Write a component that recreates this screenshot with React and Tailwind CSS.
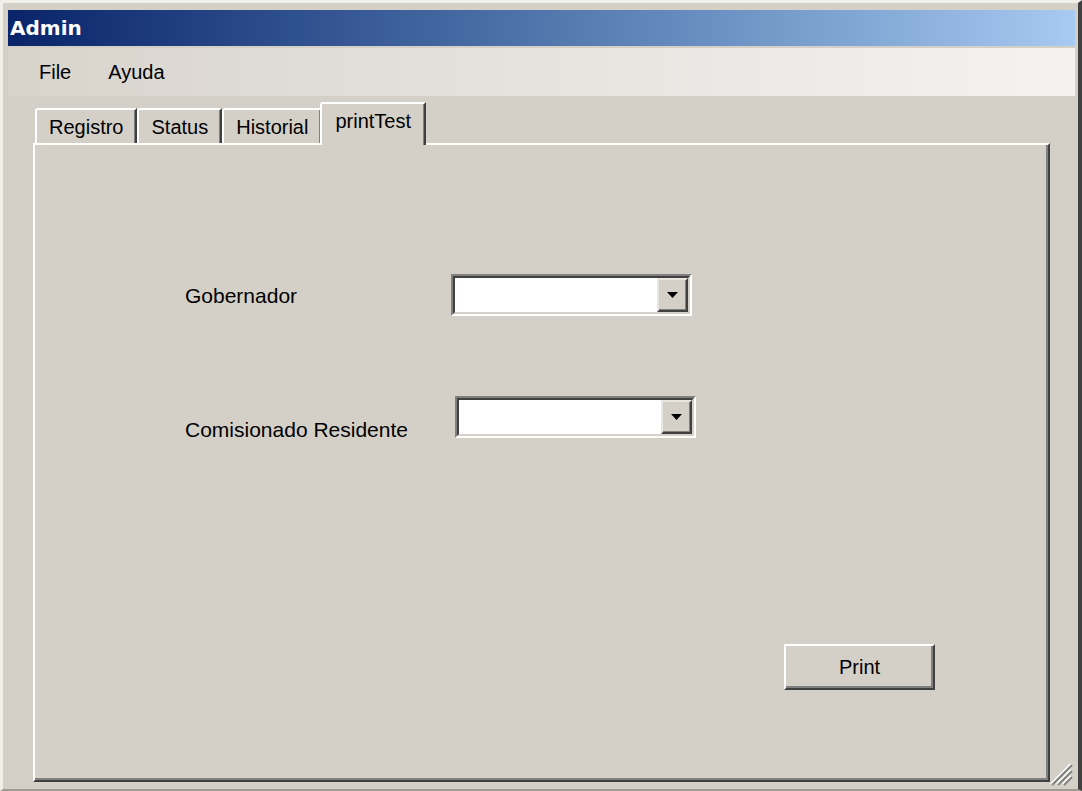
const uiFont = { fontFamily: '"Liberation Sans", Arial, sans-serif' }

const tabs = ['Registro', 'Status', 'Historial', 'printTest']
const activeTab = 'printTest'

function TitleBar() {
  return (
    <div className="flex h-[36px] items-center bg-gradient-to-r from-[#0a246a] to-[#a6caf0] pl-[2px]">
      <span
        className="text-[20px] font-bold leading-none text-white"
        style={{ fontFamily: '"DejaVu Sans", Verdana, sans-serif' }}
      >
        Admin
      </span>
    </div>
  )
}

function MenuBar() {
  return (
    <div className="mt-[2px] flex h-[48px] items-center gap-[37px] bg-gradient-to-r from-[#d8d4cc] to-[#f4f3f1] pl-[31px] text-[20px] text-black">
      <span>File</span>
      <span>Ayuda</span>
    </div>
  )
}

function Tab({ label, active }) {
  if (active) {
    return (
      <div className="relative z-10 -mx-[2px] -mb-[2px] flex h-[43px] items-start rounded-tl-[3px] border-l-2 border-t-2 border-r-2 border-l-white border-t-white border-r-[#404040] bg-[#d4d0c8] px-[13px] pt-[5px] shadow-[inset_-1px_0_0_#808080]">
        <span className="leading-[24px]">{label}</span>
      </div>
    )
  }

  return (
    <div className="flex h-[35px] items-start rounded-tl-[3px] border-l-2 border-t-2 border-r-2 border-l-white border-t-white border-r-[#404040] bg-[#d4d0c8] px-[12px] pt-[5px] shadow-[inset_-1px_0_0_#808080]">
      <span className="leading-[24px]">{label}</span>
    </div>
  )
}

function ComboBox() {
  return (
    <div className="h-[42px] w-[241px] border-2 border-t-[#808080] border-l-[#808080] border-b-white border-r-white">
      <div className="flex h-full w-full justify-end border-2 border-t-[#404040] border-l-[#404040] border-b-[#d4d0c8] border-r-[#d4d0c8] bg-white">
        <div className="flex h-full w-[31px] items-center justify-center border-2 border-t-[#e8e6e1] border-l-[#e8e6e1] border-b-[#404040] border-r-[#404040] bg-[#d4d0c8] shadow-[inset_-1px_-1px_0_#808080]">
          <svg width="11" height="6" viewBox="0 0 11 6">
            <path d="M0 0h11L5.5 6z" fill="#000" />
          </svg>
        </div>
      </div>
    </div>
  )
}

function ResizeGrip() {
  return (
    <svg className="absolute bottom-[3px] right-[5px]" width="26" height="26" viewBox="0 0 26 26">
      <g strokeWidth="2">
        <path d="M24 4L4 24" stroke="#ffffff" />
        <path d="M25 5L5 25" stroke="#808080" />
        <path d="M24 10L10 24" stroke="#ffffff" />
        <path d="M25 11L11 25" stroke="#808080" />
        <path d="M24 16L16 24" stroke="#ffffff" />
        <path d="M25 17L17 25" stroke="#808080" />
      </g>
    </svg>
  )
}

export default function App() {
  return (
    <div
      className="relative h-[791px] w-[1082px] overflow-hidden border-l-[3px] border-t-[3px] border-r-[4px] border-b-[2px] border-l-[#f1efe9] border-t-[#f1efe9] border-r-[#404040] border-b-[#a09c94] bg-[#d4d0c8] pl-[5px] pr-[3px] pt-[7px] text-black"
      style={uiFont}
    >
      <TitleBar />
      <MenuBar />

      <div className="pl-[25px] pr-[25px]">
        <div className="mt-[6px] flex items-end pl-[2px] text-[20px]">
          {tabs.map((tab) => (
            <Tab key={tab} label={tab} active={tab === activeTab} />
          ))}
        </div>

        <div className="h-[639px] border-l-2 border-t-2 border-r-2 border-b-2 border-l-white border-t-white border-r-[#404040] border-b-[#404040] shadow-[inset_-2px_-2px_0_#808080]">
          <div className="pl-[150px] pt-[129px] text-[21px]">
            <div className="flex items-start">
              <span className="mt-[10px] w-[266px] leading-[24px]">Gobernador</span>
              <ComboBox />
            </div>

            <div className="mt-[80px] flex items-start">
              <span className="mt-[22px] w-[270px] leading-[24px]">Comisionado Residente</span>
              <ComboBox />
            </div>
          </div>

          <button
            type="button"
            className="ml-[749px] mt-[202px] flex h-[46px] w-[151px] items-center justify-center border-2 border-t-white border-l-white border-b-[#404040] border-r-[#404040] bg-[#d4d0c8] text-[20px] shadow-[inset_-2px_-2px_0_#808080]"
          >
            Print
          </button>
        </div>
      </div>

      <ResizeGrip />
    </div>
  )
}
